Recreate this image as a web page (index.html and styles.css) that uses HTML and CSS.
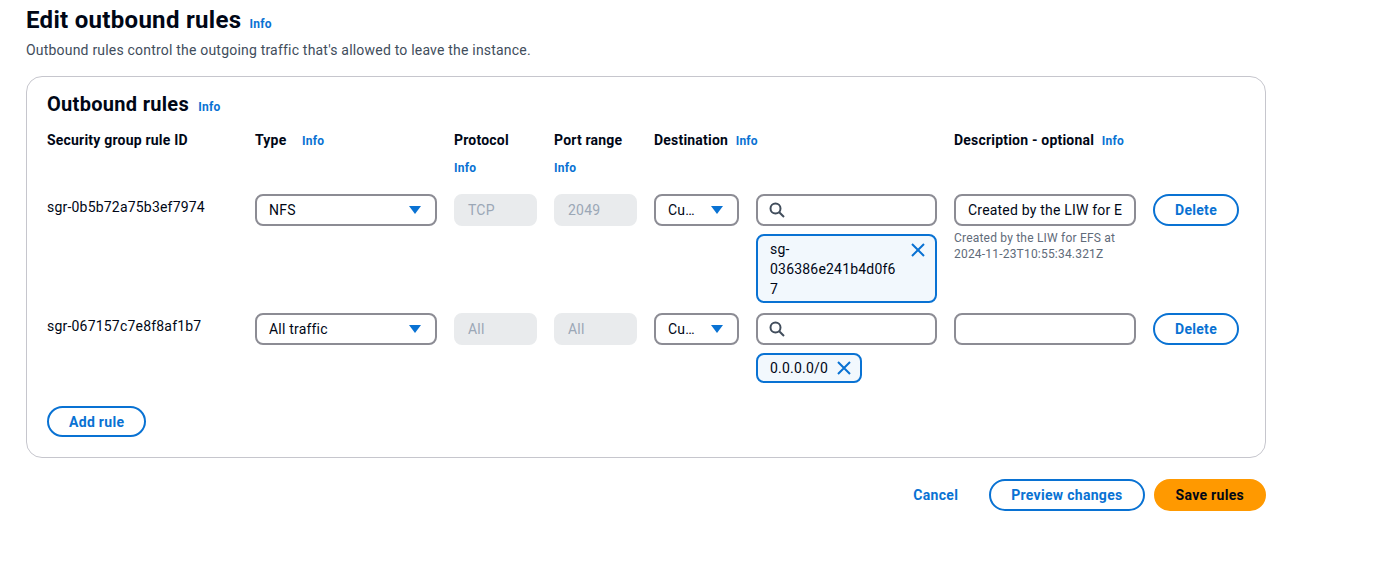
FILE: index.html
```html
<!DOCTYPE html>
<html lang="en">
<head>
<meta charset="utf-8">
<title>Edit outbound rules</title>
<link rel="stylesheet" href="styles.css">
</head>
<body>
<div class="page">
  <h1 class="title">Edit outbound rules <a class="info info-lg">Info</a></h1>
  <p class="subtitle">Outbound rules control the outgoing traffic that's allowed to leave the instance.</p>

  <section class="card">
    <h2 class="card-title">Outbound rules <a class="info info-md">Info</a></h2>

    <div class="grid head">
      <div class="lbl">Security group rule ID</div>
      <div class="lbl">Type <a class="info gap">Info</a></div>
      <div class="lbl">Protocol<a class="info block">Info</a></div>
      <div class="lbl">Port range<a class="info block">Info</a></div>
      <div class="lbl span2">Destination <a class="info gap-s">Info</a></div>
      <div class="lbl">Description - optional <a class="info gap-s">Info</a></div>
      <div></div>
    </div>

    <div class="grid row">
      <div class="rid">sgr-0b5b72a75b3ef7974</div>
      <div class="select"><span>NFS</span><svg class="caret" width="12" height="8" viewBox="0 0 12 8"><path d="M0 0h12L6 8z" fill="#0972d3"/></svg></div>
      <div class="input disabled">TCP</div>
      <div class="input disabled">2049</div>
      <div class="select sm"><span>Cu…</span><svg class="caret" width="12" height="8" viewBox="0 0 12 8"><path d="M0 0h12L6 8z" fill="#0972d3"/></svg></div>
      <div class="dest">
        <div class="input search"><svg width="16" height="16" viewBox="0 0 16 16"><circle cx="6.5" cy="6.5" r="5" fill="none" stroke="#414d5c" stroke-width="2"/><path d="M10.2 10.2L15 15" stroke="#414d5c" stroke-width="2"/></svg></div>
        <div class="token wide"><span>sg-<br>036386e241b4d0f6<br>7</span><svg class="x" width="16" height="16" viewBox="0 0 16 16"><path d="M2 2l12 12M14 2L2 14" stroke="#0972d3" stroke-width="2"/></svg></div>
      </div>
      <div class="desc">
        <div class="input text"><span class="clip">Created by the LIW for E</span></div>
        <div class="hint">Created by the LIW for EFS at<br>2024-11-23T10:55:34.321Z</div>
      </div>
      <div><button class="btn">Delete</button></div>
    </div>

    <div class="grid row">
      <div class="rid">sgr-067157c7e8f8af1b7</div>
      <div class="select"><span>All traffic</span><svg class="caret" width="12" height="8" viewBox="0 0 12 8"><path d="M0 0h12L6 8z" fill="#0972d3"/></svg></div>
      <div class="input disabled">All</div>
      <div class="input disabled">All</div>
      <div class="select sm"><span>Cu…</span><svg class="caret" width="12" height="8" viewBox="0 0 12 8"><path d="M0 0h12L6 8z" fill="#0972d3"/></svg></div>
      <div class="dest">
        <div class="input search"><svg width="16" height="16" viewBox="0 0 16 16"><circle cx="6.5" cy="6.5" r="5" fill="none" stroke="#414d5c" stroke-width="2"/><path d="M10.2 10.2L15 15" stroke="#414d5c" stroke-width="2"/></svg></div>
        <div class="token inline"><span>0.0.0.0/0</span><svg class="x2" width="16" height="16" viewBox="0 0 16 16"><path d="M2 2l12 12M14 2L2 14" stroke="#0972d3" stroke-width="2"/></svg></div>
      </div>
      <div class="desc">
        <div class="input text"></div>
      </div>
      <div><button class="btn">Delete</button></div>
    </div>

    <button class="btn add">Add rule</button>
  </section>

  <div class="footer">
    <button class="btn link">Cancel</button>
    <button class="btn">Preview changes</button>
    <button class="btn primary">Save rules</button>
  </div>
</div>
</body>
</html>
```

FILE: styles.css
```css
* { box-sizing: border-box; }
body {
  margin: 0;
  font-family: Roboto, "Noto Sans", sans-serif;
  color: #000716;
  background: #fff;
  font-size: 14px;
  line-height: 20px;
  letter-spacing: 0.2px;
}
.page {
  width: 1240px;
  margin-left: 26px;
  padding-top: 5px;
}
.title {
  margin: 0;
  font-size: 24px;
  line-height: 30px;
  font-weight: 700;
  letter-spacing: 0.3px;
}
.info {
  color: #0972d3;
  font-size: 12px;
  font-weight: 700;
  text-decoration: none;
  letter-spacing: 0.2px;
}
.info-lg { margin-left: 2px; }
.info-md { margin-left: 4px; }
.subtitle {
  margin: 1px 0 0;
  color: #414d5c;
  font-size: 14px;
  line-height: 20px;
}
.card {
  margin-top: 16px;
  border: 1px solid #c6c6cd;
  border-radius: 16px;
  padding: 15px 20px 20px;
}
.card-title {
  margin: 0;
  font-size: 20px;
  line-height: 24px;
  font-weight: 700;
  letter-spacing: 0.3px;
}
.grid {
  display: grid;
  grid-template-columns: 191px 182px 83px 83px 85px 181px 182px 86px;
  column-gap: 17px;
}
.head { margin-top: 11px; }
.lbl {
  font-weight: 700;
  font-size: 14px;
  line-height: 20px;
}
.span2 { grid-column: span 2; }
.gap { margin-left: 12px; }
.gap-s { margin-left: 4px; }
.block { display: block; margin-top: 8px; }
.row { margin-top: 16px; }
.row + .row { margin-top: 10px; }
.rid { padding-top: 3px; }
.input, .select {
  height: 32px;
  border: 2px solid #8c8c94;
  border-radius: 8px;
  padding: 0 12px;
  display: flex;
  align-items: center;
  font-size: 14px;
}
.select { justify-content: space-between; padding-right: 14px; }
.disabled {
  background: #e9ebed;
  border-color: #e9ebed;
  color: #9ba7b6;
}
.search { padding-left: 11px; }
.text { overflow: hidden; white-space: nowrap; }
.clip { white-space: nowrap; }
.token {
  margin-top: 8px;
  background: #f2f8fd;
  border: 2px solid #0972d3;
  border-radius: 8px;
  position: relative;
}
.token.wide { padding: 3px 36px 2px 12px; }
.token.inline {
  display: inline-flex;
  align-items: center;
  height: 30px;
  padding: 0 8px 0 12px;
  gap: 8px;
}
.x { position: absolute; top: 6px; right: 9px; }
.hint {
  margin-top: 4px;
  font-size: 12px;
  line-height: 16px;
  color: #5f6b7a;
}
.btn {
  font-family: inherit;
  font-size: 14px;
  font-weight: 700;
  letter-spacing: 0.3px;
  line-height: 22px;
  height: 32px;
  padding: 3px 20px;
  border: 2px solid #0972d3;
  border-radius: 20px;
  background: #fff;
  color: #0972d3;
  cursor: pointer;
}
.add { margin-top: 23px; height: 31px; padding: 2px 20px; }
.footer {
  display: flex;
  justify-content: flex-end;
  gap: 9px;
  margin-top: 21px;
}
.link { border-color: transparent; }
.primary {
  background: #ff9900;
  border-color: #ff9900;
  color: #000716;
  padding: 3px 20px;
}
```
